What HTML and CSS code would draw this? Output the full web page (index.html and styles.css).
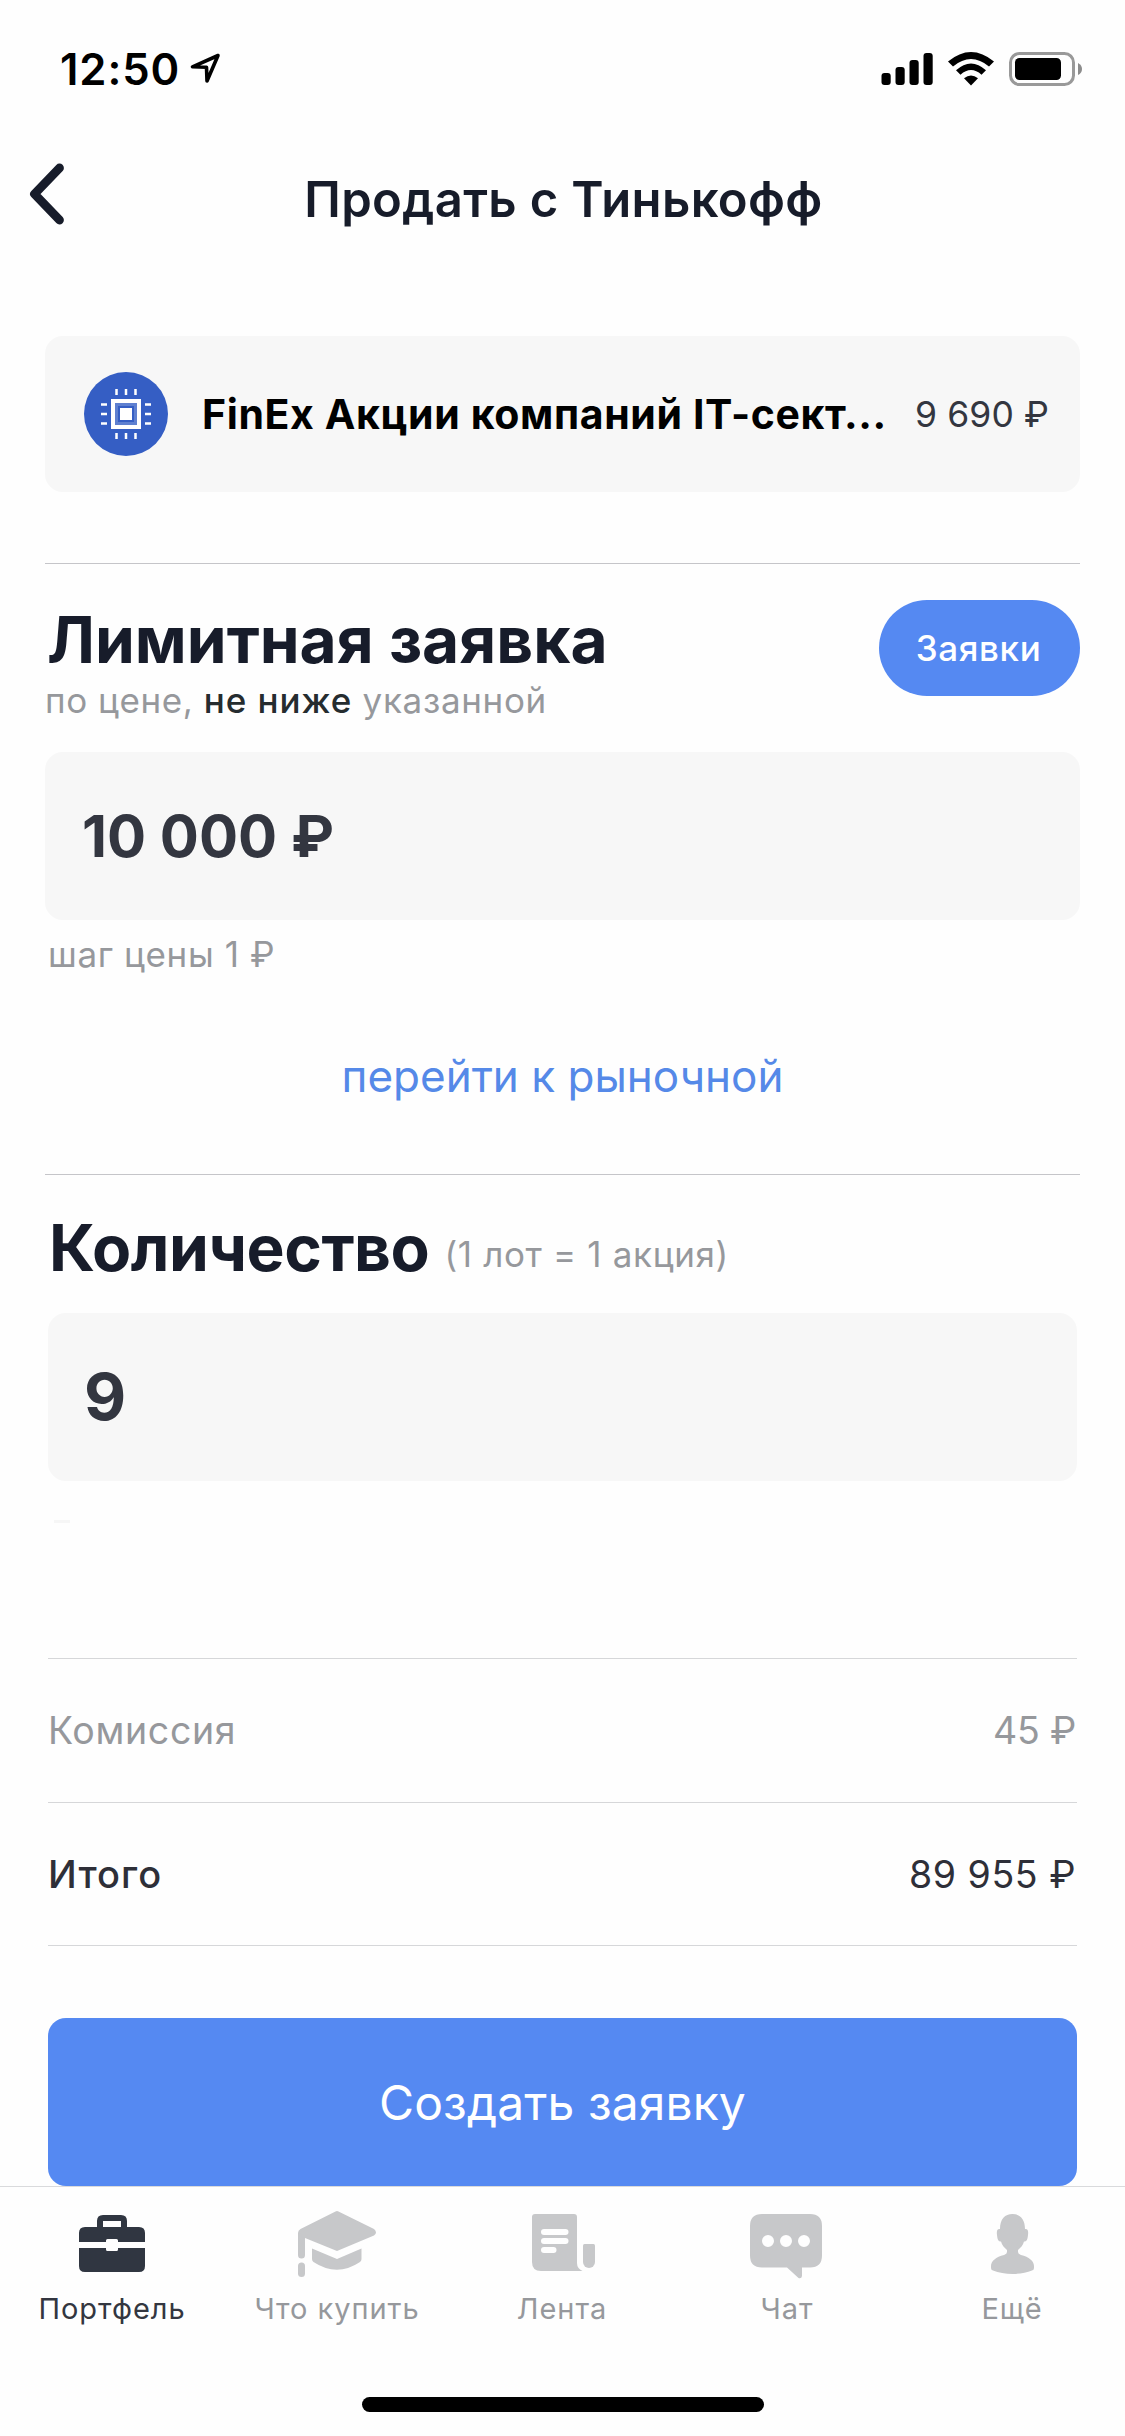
FILE: index.html
```
<!DOCTYPE html>
<html lang="ru">
<head>
<meta charset="utf-8">
<title>Продать с Тинькофф</title>
<link rel="stylesheet" href="styles.css">
</head>
<body>
<div class="screen">
  <div class="status">
    <span class="time">12:50</span>
    <svg class="location" width="32" height="32" viewBox="0 0 32 32"><path d="M29 3.5 3.5 14.8 17.5 15.2 18 29Z" fill="none" stroke="#000" stroke-width="3.6" stroke-linejoin="round"/></svg>
    <svg class="signals" width="202" height="36" viewBox="0 0 202 36">
      <rect x="0.5" y="22" width="9.2" height="12" rx="3"/>
      <rect x="14.5" y="16" width="9.2" height="18" rx="3"/>
      <rect x="28.5" y="9" width="9.2" height="25" rx="3"/>
      <rect x="42.5" y="2" width="9.2" height="32" rx="3"/>
      <path d="M67 10.500Q90 -8.500 113 10.500L108 15.500Q90 0.500 72 15.500Z"/>
      <path d="M75 19.300Q90 5.500 105 19.300L100.500 23.700Q90 14.500 79.500 23.700Z"/>
      <path d="M83 27.300Q90 21.700 97 27.300L90 34.500Z"/>
      <rect x="129.500" y="2.500" width="63" height="31" rx="9" fill="none" stroke="#999" stroke-width="3"/>
      <rect x="134" y="7" width="46" height="22" rx="4.500"/>
      <path d="M197 12Q201 14 201 18Q201 22 197 24Z" fill="#8c8c8c"/>
    </svg>
  </div>

  <div class="header">
    <svg class="back" width="40" height="64" viewBox="0 0 40 64"><path d="M32.500 6 7.500 32 32.500 58" fill="none" stroke="#171c2a" stroke-width="8.800" stroke-linecap="round" stroke-linejoin="round"/></svg>
    <h1 class="title">Продать с Тинькофф</h1>
  </div>

  <div class="card">
    <svg class="logo" width="84" height="84" viewBox="0 0 84 84">
      <circle cx="42" cy="42" r="42" fill="#355ec4"/>
      <rect x="29" y="29" width="26" height="26" fill="none" stroke="#fff" stroke-width="4"/>
      <rect x="32.500" y="32.500" width="19" height="19" fill="none" stroke="#5f80d0" stroke-width="3"/>
      <rect x="36" y="36" width="12" height="12" fill="#fff"/>
      <path d="M32.500 17v6M42 17v6M51.500 17v6M32.500 61v6M42 61v6M51.500 61v6M17 32.500h6M17 42h6M17 51.500h6M61 32.500h6M61 42h6M61 51.500h6" stroke="#fff" stroke-width="2.500"/>
    </svg>
    <span class="name">FinEx Акции компаний IT-сект...</span>
    <span class="price">9 690 ₽</span>
  </div>

  <div class="section limit">
    <div class="row">
      <div>
        <h2 class="heading">Лимитная заявка</h2>
        <p class="sub">по цене, <b class="strong">не ниже</b> <span class="tail">указанной</span></p>
      </div>
      <div class="pill">Заявки</div>
    </div>
    <div class="field price-field">10 000 ₽</div>
    <p class="note">шаг цены 1 ₽</p>
    <a class="link">перейти к рыночной</a>
  </div>

  <div class="section">
    <div class="quantity">
      <h2 class="heading narrow">Количество</h2>
      <span class="lot">(1 лот = 1 акция)</span>
    </div>
  </div>

  <div class="order">
    <div class="field count-field">9</div>
    <div class="trace"></div>
    <div class="line muted"><span class="label">Комиссия</span><span class="fee">45 ₽</span></div>
    <div class="line total"><span class="total-label">Итого</span><span class="sum">89 955 ₽</span></div>
    <div class="submit">Создать заявку</div>
  </div>

  <div class="tabs">
    <div class="tab active">
      <svg width="91" height="84" viewBox="0 0 91 84">
        <path fill-rule="evenodd" d="M12 37V28Q12 22 18 22H30V16Q30 10 36 10H54Q60 10 60 16V22H72Q78 22 78 28V37H51V35.500Q51 34 49.500 34H40.500Q39 34 39 35.500V37ZM36 16V22H54V16Z"/>
        <path d="M12 43H39V44.500Q39 46 40.500 46H49.500Q51 46 51 44.500V43H78V61Q78 67 72 67H18Q12 67 12 61Z"/>
      </svg>
      <span>Портфель</span>
    </div>
    <div class="tab">
      <svg width="91" height="84" viewBox="0 0 91 84">
        <path d="M43.500 6.500Q45 5.500 46.500 6.500L82 24Q86 27.500 82 30.500L45 46 13 33V50Q13 53.500 9.500 53.500Q6 53.500 6 50V28Q6 25.500 8.500 24Z"/>
        <path d="M20 43.500 45 54 69.500 43.500V54Q69.500 56 68 57Q45 72.500 21.500 57Q20 56 20 54Z"/>
        <rect x="6" y="57.500" width="7" height="14.500" rx="3.500"/>
      </svg>
      <span>Что купить</span>
    </div>
    <div class="tab">
      <svg width="91" height="84" viewBox="0 0 91 84">
        <path fill-rule="evenodd" d="M18 9H57Q60 9 60 12V58Q60 63.500 65.500 66H24Q15 66 15 57V12Q15 9 18 9ZM27 24a3 3 0 0 0 0 6H48.500a3 3 0 0 0 0-6ZM27 33a3 3 0 0 0 0 6H48.500a3 3 0 0 0 0-6ZM27 42a3 3 0 0 0 0 6H36.500a3 3 0 0 0 0-6Z"/>
        <path d="M67.500 39H76.500Q78 39 78 40.500V57a6 6 0 0 1-12 0V40.500Q66 39 67.500 39Z"/>
      </svg>
      <span>Лента</span>
    </div>
    <div class="tab">
      <svg width="91" height="84" viewBox="0 0 91 84">
        <path fill-rule="evenodd" d="M20 9H68Q80 9 80 21V50.500Q80 62.500 68 62.500H60V71Q59.500 74 56.500 73L45 62.500H20Q8 62.500 8 50.500V21Q8 9 20 9ZM20 36a6 6 0 0 0 12 0a6 6 0 0 0-12 0ZM38 36a6 6 0 0 0 12 0a6 6 0 0 0-12 0ZM56 36a6 6 0 0 0 12 0a6 6 0 0 0-12 0Z"/>
      </svg>
      <span>Чат</span>
    </div>
    <div class="tab">
      <svg width="91" height="84" viewBox="0 0 91 84">
        <path d="M45.500 9C53 9 58 14 58 24C61 23.500 61.500 26 61 30C60.500 35 59.500 36.500 57 36.500C56 40 54 42.500 51 45V47Q51 49 54 50C62 52 67 56 67 61V63Q67 65 65 65.500C54 70 37 70 26 65.500Q24 65 24 63V61C24 56 29 52 37 50Q40 49 40 47V45C37 42.500 35 40 34 36.500C31.500 36.500 30.500 35 30 30C29.500 26 30 23.500 33 24C33 14 38 9 45.500 9Z"/>
      </svg>
      <span>Ещё</span>
    </div>
  </div>
  <div class="home"></div>
</div>
</body>
</html>
```
FILE: styles.css
```
* { box-sizing: border-box; margin: 0; padding: 0; }
body { background: #fefefe; font-family: Inter, "Liberation Sans", sans-serif; color: #333640; }
svg { display: block; flex: none; }
.screen { width: 1125px; height: 2436px; display: flex; flex-direction: column; overflow: hidden; white-space: nowrap; }

.status { height: 132px; display: flex; align-items: flex-start; padding: 47px 42px 0 60px; color: #000; }
.time { font-size: 43.6px; line-height: 44px; font-weight: 600; letter-spacing: 0.9px; margin-top: 1px; }
.location { margin: 5px 0 0 9px; }
.signals { margin: 4px 0 0 auto; }

.header { height: 204px; display: flex; align-items: flex-start; padding: 30px 27px 0; }
.title { flex: 1; margin: 8px 38px 0 0; text-align: center; font-size: 49px; line-height: 60px; font-weight: 600; letter-spacing: 0.35px; color: #171c2a; }

.card { margin: 0 45px 71px; height: 156px; flex: none; border-radius: 18px; background: #f7f7f7; display: flex; align-items: center; padding: 0 31px 0 39px; }
.name { margin-left: 34px; font-size: 41px; font-weight: 700; letter-spacing: 0.62px; color: #000; }
.price { margin-left: auto; font-size: 35.5px; letter-spacing: 0.1px; }

.section { margin: 0 45px; border-top: 1px solid #c5c5c9; }
.limit { height: 611px; flex: none; }
.row { display: flex; justify-content: space-between; align-items: flex-start; padding-top: 36px; }
.heading { margin: 5px 0 0 2px; font-size: 64px; line-height: 70px; font-weight: 700; color: #171c2a; }
.sub { margin: 3px 0 0 0; font-size: 35px; line-height: 44px; letter-spacing: 0.55px; color: #96989c; }
.strong { font-weight: 500; letter-spacing: 0.95px; color: #252c2f; }
.tail { letter-spacing: 0.67px; }
.pill { width: 201px; height: 96px; border-radius: 48px; background: #5589f2; color: #fff; text-align: center; font-size: 35px; line-height: 96px; font-weight: 500; letter-spacing: 0.63px; padding-right: 2px; }
.field { height: 168px; border-radius: 18px; background: #f7f7f7; font-weight: 700; line-height: 168px; }
.price-field { margin-top: 30px; padding-left: 37px; font-size: 58px; }
.note { margin: 12px 0 0 3px; font-size: 35px; line-height: 44px; letter-spacing: 0.62px; color: #96989c; }
.link { display: block; margin-top: 74px; text-align: center; font-size: 44px; line-height: 52px; letter-spacing: 0; color: #5589e8; }

.quantity { height: 138px; display: flex; align-items: flex-start; padding-top: 38px; }
.quantity .heading { margin: 0 0 0 4px; }
.narrow { letter-spacing: -0.44px; }
.lot { margin: 19px 0 0 15px; font-size: 35px; line-height: 44px; letter-spacing: 0.65px; color: #96989c; }

.order { margin: 0 48px; }
.count-field { padding-left: 36px; font-size: 65px; }
.trace { width: 16px; height: 3px; margin: 39px 0 135px 6px; background: #f6f6f6; }
.line { height: 144px; border-top: 1px solid #d6d7d9; display: flex; justify-content: space-between; align-items: center; padding: 0 1px 0 0; font-size: 37.5px; }
.muted { color: #96989c; }
.total { border-bottom: 1px solid #d6d7d9; color: #2e2f38; }
.label { letter-spacing: 0.65px; }
.fee { letter-spacing: -0.2px; }
.total-label { font-size: 38px; font-weight: 500; letter-spacing: 1.1px; }
.sum { letter-spacing: 0.54px; }
.submit { margin-top: 72px; height: 168px; padding-top: 1px; border-radius: 18px; background: #5589f2; color: #fff; text-align: center; font-size: 48px; line-height: 168px; letter-spacing: 0.1px; }

.tabs { height: 211px; flex: none; display: flex; border-top: 1px solid #d9dadc; padding-top: 18px; }
.tab { width: 225px; display: flex; flex-direction: column; align-items: center; font-size: 29px; line-height: 36px; letter-spacing: 0.95px; color: #96989c; }
.tab svg { fill: #c7c8ca; margin-bottom: 2px; }
.tab span { margin-right: 1px; }
.active { color: #333640; }
.active svg { fill: #303641; }
.home { width: 402px; height: 15px; flex: none; align-self: center; border-radius: 8px; background: #000; }
```
